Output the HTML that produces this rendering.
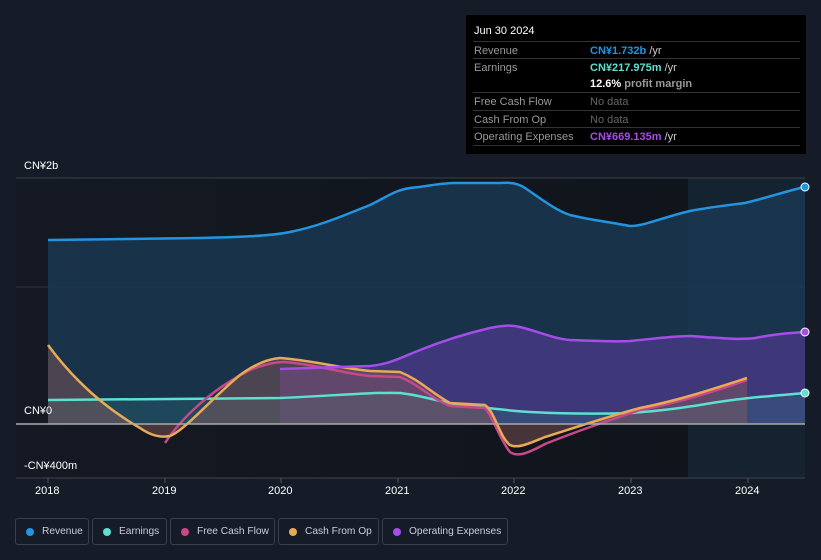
<!DOCTYPE html><html><head><style>
body{margin:0;width:821px;height:560px;background:#161c27;font-family:"Liberation Sans","Noto Sans CJK SC",sans-serif;overflow:hidden;position:relative}
.tt{position:absolute;left:466px;top:15px;width:340px;height:139px;background:#000;border-radius:2px;font-size:11px;color:#999}
.tt .h{position:absolute;left:8px;top:10px;color:#fff;font-size:11px}
.row{position:absolute;left:7px;width:327px;border-top:1px solid #333;height:17px}
.row span{position:absolute;top:3px;white-space:nowrap}
.row .v{left:117px}
.lg{position:absolute;top:518px;height:27px;border:1px solid #3a3f4a;border-radius:3px;color:#ccd;font-size:10.2px;line-height:25px;box-sizing:border-box;white-space:nowrap}
.lg i{position:absolute;left:10px;top:9px;width:8px;height:8px;border-radius:50%}
.lg span{position:absolute;left:26px;white-space:nowrap}
.ax{position:absolute;font-size:11px;color:#fff}
</style></head><body>
<svg width="821" height="560" style="position:absolute;left:0;top:0">
<defs>
<linearGradient id="bg" x1="0" y1="0" x2="1" y2="0"><stop offset="0" stop-color="#141923"/><stop offset="1" stop-color="#10141b"/></linearGradient>
</defs>
<rect x="16" y="178" width="672" height="300" fill="url(#bg)"/>
<rect x="688" y="178" width="117" height="300" fill="#152331"/>
<line x1="16" y1="178" x2="805" y2="178" stroke="#3a3f48"/>
<line x1="16" y1="287" x2="805" y2="287" stroke="#2a3340"/>
<path d="M48,240 L200,238 C240,237 270,236 290,232 C320,226 345,215 370,205 C385,198 395,190 410,188 C430,186 440,183 455,183 L500,183 C510,182 518,183 525,188 C540,198 555,210 570,215 C590,220 610,222 630,226 C645,226 660,218 690,211 C710,207 730,205 745,203 C770,197 790,190 805,187 L805,424 L48,424Z" fill="#1a3a55" fill-opacity="0.8"/>
<path d="M280,369 L370,366 C390,364 400,358 420,350 C440,342 460,335 490,328 C505,325 512,325 520,327 C540,332 555,339 570,340 C600,341 615,342 630,341 C660,338 675,336 690,336 C720,338 740,340 755,338 C775,334 790,333 805,332 L805,424 L280,424Z" fill="#4b3a8a" fill-opacity="0.75"/>
<path d="M48,400 L280,398 C330,396 370,392 400,393 C420,395 440,402 460,405 C490,408 510,411 530,412 C570,414 600,414 630,413 C660,411 680,408 700,405 C740,398 770,396 805,393 L805,424 L48,424Z" fill="#2f6f7a" fill-opacity="0.35"/>
<path d="M48,345 C70,375 100,405 140,428 C150,435 160,438 170,436 C185,430 210,400 240,375 C255,364 268,359 280,358 C310,360 340,368 370,371 L400,372 C420,380 430,392 450,403 L485,405 C495,412 500,438 510,445 C518,449 530,443 545,437 C580,426 610,416 640,408 C680,400 710,390 747,378 L747,424 L48,424Z" fill="#8a5a5a" fill-opacity="0.45"/>
<path d="M48,400 L280,398 C330,396 370,392 400,393 C420,395 440,402 460,405 C490,408 510,411 530,412 C570,414 600,414 630,413 C660,411 680,408 700,405 C740,398 770,396 805,393" stroke="#5de0cf" stroke-width="2.5" fill="none"/>
<path d="M165,443 C180,420 210,390 250,370 C265,364 275,362 285,362 C320,365 345,374 370,376 L400,377 C420,385 430,398 450,406 L485,408 C492,415 500,440 510,452 C518,458 530,452 545,444 C580,430 610,420 640,410 C680,402 710,393 747,380" stroke="#c9488a" stroke-width="2.5" fill="none"/>
<path d="M48,345 C70,375 100,405 140,428 C150,435 160,438 170,436 C185,430 210,400 240,375 C255,364 268,359 280,358 C310,360 340,368 370,371 L400,372 C420,380 430,392 450,403 L485,405 C495,412 500,438 510,445 C518,449 530,443 545,437 C580,426 610,416 640,408 C680,400 710,390 747,378" stroke="#e8aa55" stroke-width="2.5" fill="none"/>
<path d="M280,369 L370,366 C390,364 400,358 420,350 C440,342 460,335 490,328 C505,325 512,325 520,327 C540,332 555,339 570,340 C600,341 615,342 630,341 C660,338 675,336 690,336 C720,338 740,340 755,338 C775,334 790,333 805,332" stroke="#a54de8" stroke-width="2.5" fill="none"/>
<path d="M48,240 L200,238 C240,237 270,236 290,232 C320,226 345,215 370,205 C385,198 395,190 410,188 C430,186 440,183 455,183 L500,183 C510,182 518,183 525,188 C540,198 555,210 570,215 C590,220 610,222 630,226 C645,226 660,218 690,211 C710,207 730,205 745,203 C770,197 790,190 805,187" stroke="#2394e0" stroke-width="2.5" fill="none"/>
<line x1="16" y1="424" x2="805" y2="424" stroke="#aaa" stroke-width="1.5"/>
<line x1="16" y1="478" x2="805" y2="478" stroke="#3f444d"/>
<g stroke="#555"><line x1="48" y1="478" x2="48" y2="483"/><line x1="165" y1="478" x2="165" y2="483"/><line x1="281" y1="478" x2="281" y2="483"/><line x1="398" y1="478" x2="398" y2="483"/><line x1="514" y1="478" x2="514" y2="483"/><line x1="631" y1="478" x2="631" y2="483"/><line x1="748" y1="478" x2="748" y2="483"/></g>
<circle cx="805" cy="187" r="4" fill="#2394e0" stroke="#fff"/>
<circle cx="805" cy="332" r="4" fill="#a54de8" stroke="#fff"/>
<circle cx="805" cy="393" r="4" fill="#5de0cf" stroke="#fff"/>
</svg>
<div class="ax" style="left:24px;top:160px">CN¥2b</div>
<div class="ax" style="left:24px;top:405px">CN¥0</div>
<div class="ax" style="left:24px;top:460px">-CN¥400m</div>
<div class="ax" style="left:35px;top:485px">2018</div>
<div class="ax" style="left:152px;top:485px">2019</div>
<div class="ax" style="left:268px;top:485px">2020</div>
<div class="ax" style="left:385px;top:485px">2021</div>
<div class="ax" style="left:501px;top:485px">2022</div>
<div class="ax" style="left:618px;top:485px">2023</div>
<div class="ax" style="left:735px;top:485px">2024</div>
<div class="tt">
<div class="h">Jun 30 2024</div>
<div class="row" style="top:26px"><span style="left:1px">Revenue</span><span class="v"><b style="color:#2394e0">CN¥1.732b</b> <span style="position:static;color:#ccc">/yr</span></span></div>
<div class="row" style="top:43px"><span style="left:1px">Earnings</span><span class="v"><b style="color:#5de0cf">CN¥217.975m</b> <span style="position:static;color:#ccc">/yr</span></span></div>
<div class="row" style="top:60px;border-top:none"><span class="v"><b style="color:#fff">12.6%</b> <b style="color:#999">profit margin</b></span></div>
<div class="row" style="top:77px"><span style="left:1px">Free Cash Flow</span><span class="v" style="color:#666">No data</span></div>
<div class="row" style="top:95px"><span style="left:1px">Cash From Op</span><span class="v" style="color:#666">No data</span></div>
<div class="row" style="top:112px;border-bottom:1px solid #333"><span style="left:1px">Operating Expenses</span><span class="v"><b style="color:#a54de8">CN¥669.135m</b> <span style="position:static;color:#ccc">/yr</span></span></div>
</div>
<div class="lg" style="left:15px;width:74px"><i style="background:#2394e0"></i><span>Revenue</span></div>
<div class="lg" style="left:92px;width:75px"><i style="background:#5de0cf"></i><span>Earnings</span></div>
<div class="lg" style="left:170px;width:105px"><i style="background:#c9488a"></i><span>Free Cash Flow</span></div>
<div class="lg" style="left:278px;width:101px"><i style="background:#e8aa55"></i><span>Cash From Op</span></div>
<div class="lg" style="left:382px;width:126px"><i style="background:#a54de8"></i><span>Operating Expenses</span></div>
</body></html>
